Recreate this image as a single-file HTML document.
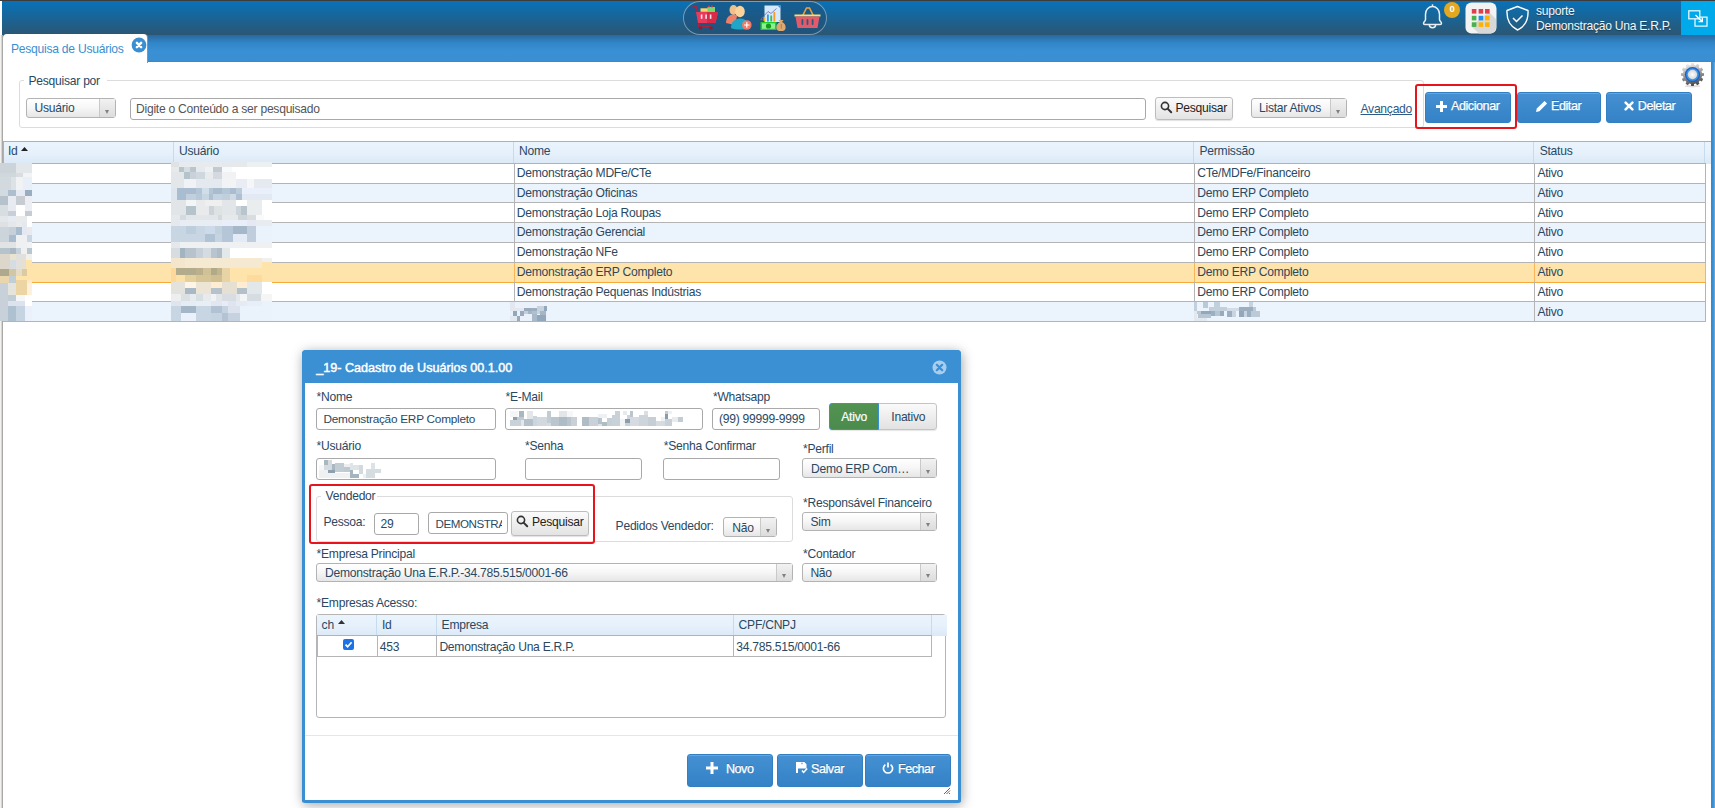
<!DOCTYPE html>
<html><head><meta charset="utf-8">
<style>
*{box-sizing:border-box;margin:0;padding:0}
html,body{width:1715px;height:808px;overflow:hidden;background:#fff;font-family:"Liberation Sans",sans-serif;font-size:12.1px;letter-spacing:-0.25px;color:#2a4961}
.bt{position:absolute;white-space:nowrap;line-height:1;color:#fff;font-size:12.6px;letter-spacing:-0.45px;-webkit-text-stroke:.25px #fff;text-shadow:0 -1px 0 rgba(0,40,90,.25)}
.a{position:absolute}
.t{position:absolute;white-space:nowrap;line-height:1}
#topdark{left:0;top:0;width:1715px;height:1px;background:#3c3c3c}
#topbar{left:2px;top:1px;width:1713px;height:34px;background:linear-gradient(#0872b8,#2b5673)}
#tabbar{left:3px;top:35px;width:1712px;height:27px;background:linear-gradient(#2a68a0 0px,#3286c8 8px,#3a90d4 16px,#3a8fd3 26px,#2f86cc 27px)}
#tab{left:3px;top:34px;width:144px;height:29px;background:#fff;border-radius:4px 4px 0 0;box-shadow:1px 0 0 #9a8f88}
.inp{position:absolute;border:1px solid #a9a9a9;border-radius:3px;background:#fff}
.sel{position:absolute;border:1px solid #b3b3b3;border-radius:3px;background:linear-gradient(#fff,#f6f6f6 50%,#e6e6e6)}
.sel .arr{position:absolute;right:0;top:0;bottom:0;width:16px;border-left:1px solid #c9c9c9;background:linear-gradient(#f2f2f2,#dcdcdc)}
.sel .arr:after{content:"";position:absolute;left:5px;bottom:3.5px;border-left:2.8px solid transparent;border-right:2.8px solid transparent;border-top:4.5px solid #808080}
.gbtn{position:absolute;border:1px solid #bdbdbd;border-radius:3px;background:linear-gradient(#fbfbfb,#e3e3e3);box-shadow:0 1px 1px rgba(0,0,0,.12)}
.bbtn{position:absolute;border:1px solid #3280c2;border-radius:3px;background:linear-gradient(#4590d2,#3a88cb 60%,#3583c6);box-shadow:inset 0 1px 0 rgba(255,255,255,.18);color:#fff;font-weight:bold;font-size:11px}
</style></head><body>
<div id="topdark" class="a"></div>
<div id="topbar" class="a"></div>
<div class="a" style="left:0;top:1px;width:2px;height:807px;background:#fff"></div>
<div id="tabbar" class="a"></div>
<div id="tab" class="a"></div>
<div class="t" style="left:11px;top:43px;color:#3a8fd0">Pesquisa de Usuários</div>
<div class="a" style="left:0;top:35px;width:1px;height:773px;background:#f3f1ed"></div><div class="a" style="left:1px;top:35px;width:1px;height:773px;background:#c5daee"></div><div class="a" style="left:2px;top:35px;width:1px;height:773px;background:#a8a8a8"></div>
<div class="a" style="left:1711px;top:62px;width:4px;height:746px;background:linear-gradient(90deg,#3388d0,#3a90d4 55%,#72afe2)"></div>
<div class="a" style="left:19px;top:80px;width:1405px;height:48px;border:1px solid #dcdcdc;border-radius:3px"></div>
<div class="a" style="left:24px;top:74px;width:83px;height:12px;background:#fff"></div>
<div class="t" style="left:28.5px;top:75.3px">Pesquisar por</div>
<div class="sel" style="left:26px;top:98px;width:90px;height:20px"><div class="arr"></div></div>
<div class="t" style="left:34.5px;top:102.2px">Usuário</div>
<div class="inp" style="left:130px;top:98px;width:1016px;height:22px"></div>
<div class="t" style="left:136px;top:102.8px;color:#555">Digite o Conteúdo a ser pesquisado</div>
<div class="gbtn" style="left:1155px;top:97px;width:78px;height:23px"></div>
<svg class="a" style="left:1160px;top:101px" width="13" height="13" viewBox="0 0 13 13"><circle cx="5" cy="5" r="3.6" fill="none" stroke="#333" stroke-width="1.6"/><line x1="7.6" y1="7.6" x2="11.2" y2="11.2" stroke="#333" stroke-width="2" stroke-linecap="round"/></svg>
<div class="t" style="left:1175.5px;top:102.2px;color:#222">Pesquisar</div>
<div class="sel" style="left:1251px;top:98px;width:96px;height:20px"><div class="arr"></div></div>
<div class="t" style="left:1259px;top:101.6px">Listar Ativos</div>
<div class="t" style="left:1360.5px;top:103px;color:#2a5a85;text-decoration:underline">Avançado</div>
<div class="a" style="left:1415px;top:84px;width:102px;height:45px;border:2px solid #e8141c;border-radius:3px"></div>
<div class="bbtn" style="left:1425px;top:92px;width:86px;height:31px"></div>
<div class="bbtn" style="left:1517px;top:92px;width:84px;height:31px"></div>
<div class="bbtn" style="left:1606px;top:92px;width:86px;height:31px"></div>
<svg class="a" style="left:1435px;top:100px" width="13" height="13" viewBox="0 0 13 13"><path d="M5 1h3v4h4v3H8v4H5V8H1V5h4z" fill="#fff"/></svg>
<div class="bt" style="left:1451px;top:100.2px">Adicionar</div>
<svg class="a" style="left:1535px;top:99px" width="13" height="14" viewBox="0 0 13 14"><path d="M1 13l0.8-3.4L9.5 1.9l2.6 2.6-7.7 7.7z" fill="#fff"/></svg>
<div class="bt" style="left:1551px;top:100.2px">Editar</div>
<svg class="a" style="left:1623.5px;top:100.5px" width="10" height="10" viewBox="0 0 10 10"><path d="M1.6 1.6l6.8 6.8M8.4 1.6l-6.8 6.8" stroke="#fff" stroke-width="2.5" stroke-linecap="round"/></svg>
<div class="bt" style="left:1637.8px;top:100.2px">Deletar</div>
<svg class="a" style="left:1680px;top:61.5px" width="25" height="26" viewBox="0 0 25 26"><defs><linearGradient id="gg" x1="0" y1="0" x2="0" y2="1"><stop offset="0" stop-color="#eeeeee"/><stop offset="0.45" stop-color="#a0a0a0"/><stop offset="1" stop-color="#454545"/></linearGradient><radialGradient id="gw"><stop offset="0" stop-color="#fff"/><stop offset="1" stop-color="#d6d6d6"/></radialGradient></defs><ellipse cx="12.5" cy="24.2" rx="8" ry="1.3" fill="rgba(0,0,0,.12)"/><path d="M12.50 2.90 L13.40 2.94 L14.19 1.02 L16.77 1.71 L16.50 3.77 L17.30 4.19 L18.06 4.67 L19.71 3.41 L21.59 5.29 L20.33 6.94 L20.81 7.70 L21.23 8.50 L23.29 8.23 L23.98 10.81 L22.06 11.60 L22.10 12.50 L22.06 13.40 L23.98 14.19 L23.29 16.77 L21.23 16.50 L20.81 17.30 L20.33 18.06 L21.59 19.71 L19.71 21.59 L18.06 20.33 L17.30 20.81 L16.50 21.23 L16.77 23.29 L14.19 23.98 L13.40 22.06 L12.50 22.10 L11.60 22.06 L10.81 23.98 L8.23 23.29 L8.50 21.23 L7.70 20.81 L6.94 20.33 L5.29 21.59 L3.41 19.71 L4.67 18.06 L4.19 17.30 L3.77 16.50 L1.71 16.77 L1.02 14.19 L2.94 13.40 L2.90 12.50 L2.94 11.60 L1.02 10.81 L1.71 8.23 L3.77 8.50 L4.19 7.70 L4.67 6.94 L3.41 5.29 L5.29 3.41 L6.94 4.67 L7.70 4.19 L8.50 3.77 L8.23 1.71 L10.81 1.02 L11.60 2.94Z" fill="url(#gg)" transform="rotate(-15 12.5 12.5)"/><circle cx="12.5" cy="12.5" r="7.6" fill="#1560c4"/><circle cx="12.5" cy="12.5" r="6.3" fill="#3a95ea"/><circle cx="12.5" cy="12.5" r="4.7" fill="url(#gw)"/></svg>
<div class="a" style="left:3px;top:141px;width:1708px;height:1px;background:#b0b0b0"></div>
<div class="a" style="left:3px;top:141px;width:1px;height:181px;background:#b0b0b0"></div>
<div class="a" style="left:4px;top:142px;width:1707px;height:21px;background:linear-gradient(#eaf4fd,#e6f1fc 50%,#dce9f6)"></div>
<div class="a" style="left:3px;top:163px;width:1703px;height:1px;background:#aeb3b8"></div>
<div class="a" style="left:1706px;top:163px;width:5px;height:1px;background:#dbe8f5"></div>
<div class="a" style="left:173px;top:142px;width:1px;height:21px;background:#c5dcef"></div>
<div class="a" style="left:513px;top:142px;width:1px;height:21px;background:#c5dcef"></div>
<div class="a" style="left:1193px;top:142px;width:1px;height:21px;background:#c5dcef"></div>
<div class="a" style="left:1533px;top:142px;width:1px;height:21px;background:#c5dcef"></div>
<div class="a" style="left:1704px;top:142px;width:1px;height:21px;background:#c5dcef"></div>
<div class="t" style="left:8px;top:144.88px">Id</div>
<div class="t" style="left:179px;top:144.88px">Usuário</div>
<div class="t" style="left:519px;top:144.88px">Nome</div>
<div class="t" style="left:1199.5px;top:144.88px">Permissão</div>
<div class="t" style="left:1539.7px;top:144.88px">Status</div>
<svg class="a" style="left:21px;top:147px" width="7" height="4"><path d="M0 4L3.5 0L7 4z" fill="#222"/></svg>
<div class="a" style="left:4px;top:164px;width:1701px;height:19px;background:#fff"></div>
<div class="a" style="left:3px;top:183px;width:1703px;height:1px;background:#b4b4b4"></div>
<div class="t" style="left:516.8px;top:166.78px">Demonstração MDFe/CTe</div>
<div class="t" style="left:1197.3px;top:166.78px">CTe/MDFe/Financeiro</div>
<div class="t" style="left:1537.4px;top:166.78px">Ativo</div>
<div class="a" style="left:4px;top:184px;width:1701px;height:18px;background:#ebf3fd"></div>
<div class="a" style="left:3px;top:202px;width:1703px;height:1px;background:#b4b4b4"></div>
<div class="t" style="left:516.8px;top:186.65px">Demonstração Oficinas</div>
<div class="t" style="left:1197.3px;top:186.65px">Demo ERP Completo</div>
<div class="t" style="left:1537.4px;top:186.65px">Ativo</div>
<div class="a" style="left:4px;top:203px;width:1701px;height:19px;background:#fff"></div>
<div class="a" style="left:3px;top:222px;width:1703px;height:1px;background:#b4b4b4"></div>
<div class="t" style="left:516.8px;top:206.52px">Demonstração Loja Roupas</div>
<div class="t" style="left:1197.3px;top:206.52px">Demo ERP Completo</div>
<div class="t" style="left:1537.4px;top:206.52px">Ativo</div>
<div class="a" style="left:4px;top:223px;width:1701px;height:19px;background:#ebf3fd"></div>
<div class="a" style="left:3px;top:242px;width:1703px;height:1px;background:#b4b4b4"></div>
<div class="t" style="left:516.8px;top:226.39px">Demonstração Gerencial</div>
<div class="t" style="left:1197.3px;top:226.39px">Demo ERP Completo</div>
<div class="t" style="left:1537.4px;top:226.39px">Ativo</div>
<div class="a" style="left:4px;top:243px;width:1701px;height:19px;background:#fff"></div>
<div class="a" style="left:3px;top:262px;width:1703px;height:1px;background:#b4b4b4"></div>
<div class="t" style="left:516.8px;top:246.26px">Demonstração NFe</div>
<div class="t" style="left:1197.3px;top:246.26px">Demo ERP Completo</div>
<div class="t" style="left:1537.4px;top:246.26px">Ativo</div>
<div class="a" style="left:4px;top:263px;width:1701px;height:19px;background:#fee3aa"></div>
<div class="a" style="left:3px;top:282px;width:1703px;height:1px;background:#f9a938"></div>
<div class="t" style="left:516.8px;top:266.13px">Demonstração ERP Completo</div>
<div class="t" style="left:1197.3px;top:266.13px">Demo ERP Completo</div>
<div class="t" style="left:1537.4px;top:266.13px">Ativo</div>
<div class="a" style="left:4px;top:283px;width:1701px;height:18px;background:#fff"></div>
<div class="a" style="left:3px;top:301px;width:1703px;height:1px;background:#b4b4b4"></div>
<div class="t" style="left:516.8px;top:286.00px">Demonstração Pequenas Indústrias</div>
<div class="t" style="left:1197.3px;top:286.00px">Demo ERP Completo</div>
<div class="t" style="left:1537.4px;top:286.00px">Ativo</div>
<div class="a" style="left:4px;top:302px;width:1701px;height:19px;background:#ebf3fd"></div>
<div class="a" style="left:3px;top:321px;width:1703px;height:1px;background:#b4b4b4"></div>
<div class="t" style="left:1537.4px;top:305.87px">Ativo</div>
<div class="a" style="left:514px;top:164px;width:1px;height:157px;background:#b4b4b4"></div>
<div class="a" style="left:1194px;top:164px;width:1px;height:157px;background:#b4b4b4"></div>
<div class="a" style="left:1534px;top:164px;width:1px;height:157px;background:#b4b4b4"></div>
<div class="a" style="left:1705px;top:164px;width:1px;height:157px;background:#b4b4b4"></div>
<div class="a" style="left:514px;top:263px;width:1px;height:19px;background:#f9b458"></div>
<div class="a" style="left:1194px;top:263px;width:1px;height:19px;background:#f9b458"></div>
<div class="a" style="left:1534px;top:263px;width:1px;height:19px;background:#f9b458"></div>
<div class="a" style="left:1705px;top:263px;width:1px;height:19px;background:#f9b458"></div>
<!--MOSAIC_T--><svg class="a" style="left:0;top:0" width="1715" height="808" shape-rendering="crispEdges"><rect x="0" y="163" width="16" height="10" fill="#ccd3d9"/><rect x="16" y="163" width="16" height="10" fill="#e3e7ea"/><rect x="0" y="173" width="16" height="4" fill="#d0d7dd"/><rect x="16" y="173" width="7" height="4" fill="#d8dde0"/><rect x="23" y="173" width="9" height="4" fill="#f2f3f4"/><rect x="0" y="177" width="11" height="13" fill="#d2d9df"/><rect x="11" y="177" width="5" height="13" fill="#dde2e5"/><rect x="16" y="177" width="7" height="13" fill="#f1f2f3"/><rect x="23" y="177" width="9" height="13" fill="#e8eff9"/><rect x="0" y="190" width="8" height="6" fill="#d3dae0"/><rect x="8" y="190" width="8" height="6" fill="#adbfcf"/><rect x="16" y="190" width="9" height="6" fill="#e6ebf3"/><rect x="25" y="190" width="7" height="6" fill="#98adbf"/><rect x="0" y="196" width="8" height="9" fill="#b5c2cb"/><rect x="8" y="196" width="8" height="9" fill="#e8ebf2"/><rect x="16" y="196" width="9" height="9" fill="#c6ccd2"/><rect x="25" y="196" width="7" height="9" fill="#eceef3"/><rect x="0" y="205" width="8" height="6" fill="#d7dde1"/><rect x="8" y="205" width="8" height="6" fill="#e7eaf0"/><rect x="16" y="205" width="9" height="6" fill="#ffffff"/><rect x="25" y="205" width="7" height="6" fill="#eceef3"/><rect x="0" y="211" width="8" height="5" fill="#d7dde1"/><rect x="8" y="211" width="8" height="5" fill="#c8cfd6"/><rect x="16" y="211" width="9" height="5" fill="#ffffff"/><rect x="25" y="211" width="7" height="5" fill="#c5ccd3"/><rect x="0" y="216" width="8" height="6" fill="#e3e7ea"/><rect x="8" y="216" width="8" height="6" fill="#e6eaf2"/><rect x="16" y="216" width="11" height="6" fill="#e8eaec"/><rect x="27" y="216" width="5" height="6" fill="#ffffff"/><rect x="0" y="222" width="8" height="5" fill="#dde1e4"/><rect x="8" y="222" width="8" height="5" fill="#e5e8ea"/><rect x="16" y="222" width="6" height="5" fill="#e9ebed"/><rect x="22" y="222" width="5" height="5" fill="#e4e8f0"/><rect x="27" y="222" width="5" height="5" fill="#ffffff"/><rect x="0" y="227" width="9" height="8" fill="#cdd5dc"/><rect x="9" y="227" width="7" height="8" fill="#c7d0d8"/><rect x="16" y="227" width="6" height="8" fill="#a9bcce"/><rect x="22" y="227" width="5" height="8" fill="#e4e8f0"/><rect x="27" y="227" width="5" height="8" fill="#e8eaf0"/><rect x="0" y="235" width="9" height="7" fill="#cdd5dc"/><rect x="9" y="235" width="7" height="7" fill="#a9bccd"/><rect x="16" y="235" width="11" height="7" fill="#eef0f2"/><rect x="27" y="235" width="5" height="7" fill="#c9d7e5"/><rect x="0" y="242" width="16" height="6" fill="#e1e3e5"/><rect x="16" y="242" width="11" height="6" fill="#eef0f1"/><rect x="27" y="242" width="5" height="6" fill="#f1f2f3"/><rect x="0" y="248" width="10" height="6" fill="#b4c3cc"/><rect x="10" y="248" width="6" height="6" fill="#a9b8c3"/><rect x="16" y="248" width="5" height="6" fill="#c6d1d9"/><rect x="21" y="248" width="6" height="6" fill="#eef0f1"/><rect x="27" y="248" width="5" height="6" fill="#b8c6d0"/><rect x="0" y="254" width="10" height="6" fill="#ddd6ca"/><rect x="10" y="254" width="6" height="6" fill="#ebe3d2"/><rect x="16" y="254" width="10" height="6" fill="#e1e0dc"/><rect x="26" y="254" width="6" height="6" fill="#f1f0eb"/><rect x="0" y="260" width="10" height="9" fill="#ddd6ca"/><rect x="10" y="260" width="6" height="9" fill="#d6dde2"/><rect x="16" y="260" width="5" height="9" fill="#e1e0dc"/><rect x="21" y="260" width="5" height="9" fill="#e6e0d0"/><rect x="26" y="260" width="6" height="9" fill="#fee3aa"/><rect x="0" y="269" width="9" height="7" fill="#aea88c"/><rect x="9" y="269" width="7" height="7" fill="#d3c6a4"/><rect x="16" y="269" width="6" height="7" fill="#e6dcc6"/><rect x="22" y="269" width="5" height="7" fill="#dccaa0"/><rect x="27" y="269" width="5" height="7" fill="#fee3aa"/><rect x="0" y="276" width="9" height="7" fill="#ead6ad"/><rect x="9" y="276" width="7" height="7" fill="#c0ced8"/><rect x="16" y="276" width="16" height="4" fill="#fee3aa"/><rect x="16" y="280" width="11" height="3" fill="#ecd5a3"/><rect x="27" y="280" width="5" height="3" fill="#fde8c7"/><rect x="0" y="283" width="8" height="12" fill="#c8d1d9"/><rect x="8" y="283" width="8" height="12" fill="#e4e3dc"/><rect x="16" y="283" width="11" height="12" fill="#ecd5a3"/><rect x="27" y="283" width="5" height="12" fill="#fff0dc"/><rect x="0" y="295" width="8" height="26" fill="#c8d1d9"/><rect x="8" y="295" width="8" height="6" fill="#c0cdd5"/><rect x="16" y="295" width="9" height="6" fill="#f4f6f8"/><rect x="25" y="295" width="7" height="6" fill="#ffffff"/><rect x="8" y="301" width="17" height="5" fill="#dce3ee"/><rect x="25" y="301" width="7" height="5" fill="#ffffff"/><rect x="8" y="306" width="8" height="15" fill="#adc1d1"/><rect x="16" y="306" width="9" height="15" fill="#c6d4e1"/><rect x="25" y="306" width="7" height="15" fill="#eaf1fb"/><rect x="171" y="162" width="8" height="5" fill="#dfe3e6"/><rect x="179" y="162" width="43" height="5" fill="#e8ebee"/><rect x="222" y="162" width="25" height="5" fill="#e6e9ec"/><rect x="247" y="162" width="25" height="5" fill="#edf0f2"/><rect x="171" y="167" width="8" height="5" fill="#e8e9eb"/><rect x="179" y="167" width="5" height="5" fill="#b9c5cd"/><rect x="184" y="167" width="6" height="5" fill="#d5dde0"/><rect x="190" y="167" width="6" height="5" fill="#bac6ce"/><rect x="196" y="167" width="9" height="5" fill="#e6eaed"/><rect x="205" y="167" width="8" height="5" fill="#eef1f3"/><rect x="213" y="167" width="9" height="5" fill="#c2cad1"/><rect x="222" y="167" width="10" height="5" fill="#f8f9fa"/><rect x="232" y="167" width="40" height="5" fill="#ffffff"/><rect x="171" y="172" width="13" height="7" fill="#e4e7ea"/><rect x="184" y="172" width="6" height="7" fill="#b5c3cb"/><rect x="190" y="172" width="6" height="7" fill="#c9d2d9"/><rect x="196" y="172" width="9" height="7" fill="#d0d8df"/><rect x="205" y="172" width="8" height="7" fill="#e8ebee"/><rect x="213" y="172" width="9" height="7" fill="#d3d9df"/><rect x="222" y="172" width="14" height="7" fill="#f1f2f4"/><rect x="236" y="172" width="36" height="7" fill="#ffffff"/><rect x="171" y="179" width="13" height="9" fill="#e4e7ea"/><rect x="184" y="179" width="12" height="9" fill="#f0f2f5"/><rect x="196" y="179" width="26" height="9" fill="#e4e8ef"/><rect x="222" y="179" width="14" height="9" fill="#f2f3f5"/><rect x="236" y="179" width="11" height="9" fill="#e9ecf3"/><rect x="247" y="179" width="7" height="9" fill="#f5f6f8"/><rect x="254" y="179" width="18" height="9" fill="#e5e9f0"/><rect x="171" y="188" width="6" height="6" fill="#dde5ef"/><rect x="177" y="188" width="19" height="6" fill="#aabdd0"/><rect x="196" y="188" width="6" height="6" fill="#b4c5d6"/><rect x="202" y="188" width="7" height="6" fill="#d0deea"/><rect x="209" y="188" width="4" height="6" fill="#b3c5d6"/><rect x="213" y="188" width="9" height="6" fill="#a8bcce"/><rect x="222" y="188" width="8" height="6" fill="#b5c6d6"/><rect x="230" y="188" width="6" height="6" fill="#aabdd0"/><rect x="236" y="188" width="6" height="6" fill="#bccbd9"/><rect x="242" y="188" width="30" height="6" fill="#e9f0fb"/><rect x="171" y="194" width="6" height="6" fill="#dde5ef"/><rect x="177" y="194" width="9" height="6" fill="#a9bdd0"/><rect x="186" y="194" width="10" height="6" fill="#c2d0de"/><rect x="196" y="194" width="6" height="6" fill="#b7c8d8"/><rect x="202" y="194" width="7" height="6" fill="#c8d6e4"/><rect x="209" y="194" width="4" height="6" fill="#aec1d3"/><rect x="213" y="194" width="9" height="6" fill="#c4d3e1"/><rect x="222" y="194" width="8" height="6" fill="#c1cfdd"/><rect x="230" y="194" width="6" height="6" fill="#d0d9e4"/><rect x="236" y="194" width="6" height="6" fill="#aec0d1"/><rect x="242" y="194" width="30" height="6" fill="#e2e9f3"/><rect x="171" y="200" width="15" height="6" fill="#e1e5e7"/><rect x="186" y="200" width="10" height="6" fill="#f4f5f6"/><rect x="196" y="200" width="9" height="6" fill="#e8eaeb"/><rect x="205" y="200" width="17" height="6" fill="#efefef"/><rect x="222" y="200" width="14" height="6" fill="#e3e6e8"/><rect x="236" y="200" width="11" height="6" fill="#ffffff"/><rect x="247" y="200" width="15" height="6" fill="#eaedee"/><rect x="262" y="200" width="10" height="6" fill="#ffffff"/><rect x="171" y="206" width="15" height="9" fill="#e1e5e7"/><rect x="186" y="206" width="10" height="9" fill="#b5c3cb"/><rect x="196" y="206" width="13" height="9" fill="#e8eaeb"/><rect x="209" y="206" width="5" height="9" fill="#ccd3d9"/><rect x="214" y="206" width="8" height="9" fill="#dde2e3"/><rect x="222" y="206" width="14" height="9" fill="#e3e6e8"/><rect x="236" y="206" width="5" height="9" fill="#cdd5dc"/><rect x="241" y="206" width="6" height="9" fill="#b8c5cd"/><rect x="247" y="206" width="15" height="9" fill="#eaedee"/><rect x="262" y="206" width="10" height="9" fill="#ffffff"/><rect x="171" y="215" width="9" height="5" fill="#e6e9ea"/><rect x="180" y="215" width="6" height="5" fill="#d2dbe1"/><rect x="186" y="215" width="32" height="5" fill="#e3e6e8"/><rect x="218" y="215" width="4" height="5" fill="#d3dade"/><rect x="222" y="215" width="16" height="5" fill="#e6e9ea"/><rect x="238" y="215" width="9" height="5" fill="#d0d6d8"/><rect x="247" y="215" width="9" height="5" fill="#d8dde2"/><rect x="256" y="215" width="8" height="5" fill="#fafafa"/><rect x="264" y="215" width="8" height="5" fill="#ffffff"/><rect x="171" y="220" width="9" height="6" fill="#e5e9ee"/><rect x="180" y="220" width="42" height="6" fill="#e8ecf3"/><rect x="222" y="220" width="25" height="6" fill="#e9eef8"/><rect x="247" y="220" width="9" height="6" fill="#e6e9f1"/><rect x="256" y="220" width="16" height="6" fill="#e8ebf0"/><rect x="171" y="226" width="25" height="8" fill="#c8d6e3"/><rect x="186" y="226" width="10" height="8" fill="#bccddb"/><rect x="205" y="226" width="10" height="8" fill="#cddaea"/><rect x="215" y="226" width="7" height="8" fill="#c2d1de"/><rect x="222" y="226" width="11" height="16" fill="#b4c6d7"/><rect x="233" y="226" width="14" height="8" fill="#a5b8c9"/><rect x="247" y="226" width="9" height="16" fill="#bfcddd"/><rect x="256" y="226" width="16" height="16" fill="#eaf2fc"/><rect x="171" y="234" width="34" height="8" fill="#c8d6e3"/><rect x="196" y="226" width="9" height="8" fill="#c8d6e3"/><rect x="205" y="234" width="10" height="8" fill="#b0c3d5"/><rect x="215" y="234" width="7" height="8" fill="#c6d4e1"/><rect x="233" y="234" width="14" height="8" fill="#e3ecf6"/><rect x="171" y="242" width="9" height="6" fill="#e4e8eb"/><rect x="180" y="242" width="92" height="6" fill="#eef0f2"/><rect x="171" y="248" width="9" height="10" fill="#d6dce0"/><rect x="180" y="248" width="5" height="10" fill="#a3b4c1"/><rect x="185" y="248" width="11" height="10" fill="#b6c3cc"/><rect x="196" y="248" width="7" height="10" fill="#c7d0d8"/><rect x="203" y="248" width="8" height="10" fill="#d4dce1"/><rect x="211" y="248" width="6" height="10" fill="#b8c4ce"/><rect x="217" y="248" width="5" height="10" fill="#b0bdc8"/><rect x="222" y="248" width="8" height="10" fill="#e3e8eb"/><rect x="230" y="248" width="42" height="10" fill="#ffffff"/><rect x="171" y="258" width="14" height="10" fill="#f3e6cd"/><rect x="185" y="258" width="77" height="10" fill="#f6e9d2"/><rect x="262" y="258" width="10" height="4" fill="#f0f0f0"/><rect x="262" y="262" width="10" height="6" fill="#fee3aa"/><rect x="171" y="268" width="5" height="14" fill="#fed79a"/><rect x="176" y="268" width="20" height="7" fill="#b3ac8c"/><rect x="196" y="268" width="7" height="7" fill="#bcb08c"/><rect x="203" y="268" width="8" height="7" fill="#cfc297"/><rect x="211" y="268" width="6" height="7" fill="#b2a988"/><rect x="217" y="268" width="5" height="7" fill="#c1b58f"/><rect x="222" y="268" width="8" height="14" fill="#e7d3a4"/><rect x="230" y="268" width="42" height="14" fill="#fee3aa"/><rect x="176" y="275" width="9" height="7" fill="#fde0a6"/><rect x="185" y="275" width="11" height="7" fill="#e3d09c"/><rect x="196" y="275" width="15" height="7" fill="#d6c697"/><rect x="211" y="275" width="11" height="7" fill="#cfc093"/><rect x="247" y="275" width="15" height="7" fill="#fedb9c"/><rect x="171" y="282" width="14" height="12" fill="#e4e2dc"/><rect x="185" y="282" width="11" height="6" fill="#fff5e6"/><rect x="196" y="282" width="15" height="12" fill="#ece4d5"/><rect x="211" y="282" width="11" height="6" fill="#feecd3"/><rect x="222" y="282" width="15" height="12" fill="#e6e0d2"/><rect x="237" y="282" width="10" height="6" fill="#feecd3"/><rect x="247" y="282" width="15" height="12" fill="#e2e7ea"/><rect x="262" y="282" width="10" height="12" fill="#ffffff"/><rect x="185" y="288" width="11" height="6" fill="#a8b8c5"/><rect x="211" y="288" width="11" height="6" fill="#b5c2cc"/><rect x="237" y="288" width="10" height="6" fill="#b3c0ca"/><rect x="171" y="294" width="10" height="7" fill="#eceeef"/><rect x="181" y="294" width="9" height="7" fill="#dbe0e3"/><rect x="190" y="294" width="6" height="7" fill="#e8ebed"/><rect x="196" y="294" width="7" height="7" fill="#d8dfe2"/><rect x="203" y="294" width="8" height="7" fill="#e8ebed"/><rect x="211" y="294" width="5" height="7" fill="#f1f2f3"/><rect x="216" y="294" width="6" height="7" fill="#e2e6e8"/><rect x="222" y="294" width="14" height="7" fill="#d8dde3"/><rect x="236" y="294" width="4" height="7" fill="#e4e8eb"/><rect x="240" y="294" width="7" height="7" fill="#f4f5f6"/><rect x="247" y="294" width="14" height="7" fill="#d6dde2"/><rect x="261" y="294" width="11" height="7" fill="#f5f5f5"/><rect x="171" y="301" width="10" height="5" fill="#dfe5ed"/><rect x="181" y="301" width="15" height="5" fill="#e6ecf3"/><rect x="196" y="301" width="15" height="5" fill="#e8eef6"/><rect x="211" y="301" width="11" height="5" fill="#e1e6f0"/><rect x="222" y="301" width="6" height="5" fill="#e8ecf4"/><rect x="228" y="301" width="8" height="5" fill="#dfe5ef"/><rect x="236" y="301" width="11" height="5" fill="#e6eaf3"/><rect x="247" y="301" width="15" height="5" fill="#e8eef8"/><rect x="262" y="301" width="10" height="5" fill="#eaf2fc"/><rect x="171" y="306" width="10" height="15" fill="#c8d5e2"/><rect x="181" y="306" width="15" height="7" fill="#a4b7c9"/><rect x="196" y="306" width="15" height="15" fill="#c8d5e2"/><rect x="211" y="306" width="11" height="7" fill="#b0c2d3"/><rect x="222" y="306" width="6" height="7" fill="#c5d3e1"/><rect x="228" y="306" width="12" height="7" fill="#dce3ee"/><rect x="240" y="306" width="32" height="15" fill="#eaf2fc"/><rect x="181" y="313" width="15" height="8" fill="#eaf1fb"/><rect x="211" y="313" width="11" height="8" fill="#c6d4e1"/><rect x="222" y="313" width="6" height="8" fill="#b3c3d3"/><rect x="228" y="313" width="12" height="8" fill="#c6d2df"/><rect x="510" y="302" width="37" height="19" fill="#eaf1fb"/><rect x="510" y="302" width="5" height="6" fill="#e3e8f0"/><rect x="510" y="308" width="14" height="3" fill="#e3e8f0"/><rect x="524" y="308" width="7" height="3" fill="#98aabc"/><rect x="531" y="308" width="6" height="3" fill="#9caec0"/><rect x="537" y="306" width="7" height="5" fill="#c6d3df"/><rect x="544" y="306" width="3" height="5" fill="#93a7ba"/><rect x="513" y="311" width="4" height="5" fill="#93a7ba"/><rect x="520" y="311" width="4" height="5" fill="#98aabc"/><rect x="524" y="311" width="4" height="3" fill="#c2d0dd"/><rect x="528" y="311" width="4" height="3" fill="#a5b6c7"/><rect x="532" y="311" width="5" height="3" fill="#b1c0cf"/><rect x="537" y="311" width="3" height="3" fill="#c8d5e1"/><rect x="540" y="311" width="6" height="4" fill="#a5b6c6"/><rect x="510" y="316" width="7" height="5" fill="#e3e9f1"/><rect x="517" y="316" width="3" height="5" fill="#98aabc"/><rect x="532" y="314" width="5" height="7" fill="#a8b9ca"/><rect x="537" y="315" width="9" height="6" fill="#93a7ba"/><rect x="1194" y="302" width="3" height="9" fill="#c2d0dd"/><rect x="1203" y="302" width="5" height="6" fill="#b8c9d8"/><rect x="1214" y="302" width="6" height="8" fill="#c2d0dd"/><rect x="1209" y="307" width="18" height="4" fill="#c2d0dd"/><rect x="1227" y="308" width="12" height="3" fill="#d1dce8"/><rect x="1239" y="307" width="14" height="4" fill="#9baec0"/><rect x="1249" y="302" width="4" height="5" fill="#c5d2df"/><rect x="1253" y="307" width="3" height="4" fill="#bccad8"/><rect x="1194" y="311" width="7" height="3" fill="#bcc7d2"/><rect x="1201" y="311" width="10" height="3" fill="#93a7ba"/><rect x="1211" y="311" width="4" height="5" fill="#9cafc1"/><rect x="1215" y="311" width="5" height="5" fill="#b6c5d3"/><rect x="1220" y="311" width="4" height="5" fill="#97aabc"/><rect x="1227" y="311" width="5" height="6" fill="#9cafc1"/><rect x="1232" y="311" width="4" height="6" fill="#c8d4e0"/><rect x="1239" y="311" width="5" height="6" fill="#93a7ba"/><rect x="1244" y="311" width="3" height="6" fill="#c8d4e0"/><rect x="1247" y="311" width="4" height="6" fill="#9cafc1"/><rect x="1251" y="311" width="9" height="6" fill="#bccad8"/><rect x="1198" y="314" width="13" height="4" fill="#b6c5d3"/><rect x="1194" y="318" width="13" height="3" fill="#e3e7ee"/><rect x="1194" y="311" width="3" height="10" fill="#e3e7ee"/></svg>
<div class="a" style="left:302px;top:350px;width:659px;height:453px;border:3px solid #3a8fd3;border-top:0;border-radius:4px 4px 3px 3px;background:#fff;box-shadow:1px 2px 12px rgba(0,0,0,.36)"></div>
<div class="a" style="left:302px;top:350px;width:659px;height:33px;background:#3b8fd3;border-radius:4px 4px 0 0"></div>
<div class="t" style="left:316.3px;top:361.6px;font-size:12.6px;color:#fff;letter-spacing:0;-webkit-text-stroke:.45px #fff">_19- Cadastro de Usuários 00.1.00</div>
<svg class="a" style="left:932px;top:360px" width="15" height="15" viewBox="0 0 15 15"><circle cx="7.5" cy="7.5" r="7" fill="#a9cdee"/><path d="M4.8 4.8l5.4 5.4M10.2 4.8l-5.4 5.4" stroke="#3b8fd3" stroke-width="2.2" stroke-linecap="round"/></svg>
<div class="t" style="left:316.5px;top:390.88px;">*Nome</div>
<div class="t" style="left:505.5px;top:390.98px;">*E-Mail</div>
<div class="t" style="left:713px;top:391.08px;">*Whatsapp</div>
<div class="inp" style="left:316px;top:408px;width:180px;height:22px"></div>
<div class="t" style="left:323.5px;top:413.93px;font-size:11.8px">Demonstração ERP Completo</div>
<div class="inp" style="left:505px;top:408px;width:198px;height:22px"></div>
<div class="inp" style="left:712px;top:408px;width:108px;height:22px"></div>
<div class="t" style="left:719px;top:413.38px;">(99) 99999-9999</div>
<div class="a" style="left:829px;top:403px;width:108px;height:27px;border:1px solid #c4c4c4;border-radius:3px;background:linear-gradient(#fafafa,#e2e2e2);box-shadow:0 1px 1px rgba(0,0,0,.1)"></div>
<div class="a" style="left:829px;top:403px;width:50px;height:27px;border:1px solid #3a8fd3;border-right:1.5px solid #3a8fd3;border-radius:3px 0 0 3px;background:linear-gradient(#529352,#4b8b4d)"></div>
<div class="t" style="left:841.3px;top:411.18px;color:#fff;-webkit-text-stroke:.2px #fff">Ativo</div>
<div class="t" style="left:891.3px;top:411.18px;">Inativo</div>
<div class="t" style="left:316.5px;top:439.88px;">*Usuário</div>
<div class="t" style="left:525px;top:439.88px;">*Senha</div>
<div class="t" style="left:663.7px;top:439.88px;">*Senha Confirmar</div>
<div class="t" style="left:803px;top:442.98px;">*Perfil</div>
<div class="inp" style="left:316px;top:458px;width:180px;height:22px"></div>
<svg class="a" style="left:0;top:0" width="1715" height="808" shape-rendering="crispEdges"><rect x="510" y="411" width="8" height="6" fill="#f3f5f6"/><rect x="519" y="411" width="5" height="6" fill="#a9b7c0"/><rect x="527" y="411" width="6" height="11" fill="#e3e7ea"/><rect x="547" y="411" width="4" height="12" fill="#c2ccd3"/><rect x="559" y="411" width="8" height="6" fill="#e2e6e9"/><rect x="567" y="411" width="6" height="6" fill="#f6f7f8"/><rect x="513" y="417" width="4" height="3" fill="#8fa1ae"/><rect x="517" y="417" width="7" height="3" fill="#bfcad1"/><rect x="510" y="420" width="11" height="6" fill="#c9d2d8"/><rect x="521" y="420" width="3" height="6" fill="#e3e7ea"/><rect x="524" y="419" width="9" height="7" fill="#b4c1ca"/><rect x="533" y="416" width="4" height="10" fill="#ccd5dc"/><rect x="537" y="417" width="10" height="9" fill="#d2d9de"/><rect x="546" y="423" width="5" height="3" fill="#d5dbe0"/><rect x="551" y="417" width="8" height="9" fill="#bac6ce"/><rect x="559" y="417" width="8" height="9" fill="#adbcc5"/><rect x="567" y="417" width="4" height="9" fill="#b9c5cd"/><rect x="571" y="417" width="6" height="9" fill="#c9d1d7"/><rect x="582" y="417" width="7" height="9" fill="#aebcc5"/><rect x="589" y="417" width="9" height="9" fill="#c8d1d8"/><rect x="598" y="418" width="4" height="6" fill="#b3c0c9"/><rect x="598" y="424" width="5" height="2" fill="#dde3e6"/><rect x="598" y="414" width="9" height="4" fill="#eef1f3"/><rect x="600" y="418" width="2" height="4" fill="#bac6ce"/><rect x="602" y="422" width="5" height="4" fill="#aebcc5"/><rect x="607" y="418" width="5" height="8" fill="#c5cfd6"/><rect x="612" y="415" width="8" height="11" fill="#c8d1d8"/><rect x="615" y="411" width="5" height="4" fill="#c8d1d8"/><rect x="620" y="419" width="5" height="7" fill="#f1f3f4"/><rect x="623" y="411" width="4" height="4" fill="#e6eaed"/><rect x="630" y="411" width="3" height="6" fill="#bac6ce"/><rect x="627" y="415" width="3" height="4" fill="#ccd5db"/><rect x="625" y="419" width="5" height="4" fill="#8b9dab"/><rect x="625" y="423" width="5" height="3" fill="#c8d1d8"/><rect x="630" y="417" width="9" height="9" fill="#d5dbe0"/><rect x="639" y="415" width="9" height="11" fill="#cdd5db"/><rect x="644" y="411" width="4" height="4" fill="#d9dfe3"/><rect x="648" y="417" width="8" height="9" fill="#c5ced5"/><rect x="656" y="421" width="9" height="5" fill="#d5dce0"/><rect x="661" y="417" width="4" height="4" fill="#eef1f3"/><rect x="665" y="411" width="3" height="3" fill="#c2ccd3"/><rect x="668" y="411" width="4" height="3" fill="#eef1f3"/><rect x="665" y="414" width="3" height="5" fill="#8a9cab"/><rect x="665" y="419" width="7" height="7" fill="#c8d1d8"/><rect x="672" y="417" width="6" height="5" fill="#e8ecee"/><rect x="678" y="417" width="5" height="5" fill="#c2ccd3"/><rect x="324" y="460" width="4" height="5" fill="#a9b7c0"/><rect x="328" y="460" width="4" height="10" fill="#d5dce0"/><rect x="319" y="465" width="5" height="5" fill="#f6f7f8"/><rect x="324" y="465" width="4" height="5" fill="#d5dce0"/><rect x="332" y="464" width="3" height="6" fill="#aab7c0"/><rect x="335" y="463" width="9" height="9" fill="#c2ccd3"/><rect x="344" y="467" width="6" height="5" fill="#bfc9d0"/><rect x="344" y="464" width="6" height="3" fill="#eceef0"/><rect x="350" y="465" width="9" height="5" fill="#e3e7ea"/><rect x="359" y="465" width="4" height="8" fill="#d0d7dd"/><rect x="319" y="470" width="9" height="8" fill="#eef0f2"/><rect x="328" y="470" width="7" height="3" fill="#8ea0ae"/><rect x="328" y="473" width="22" height="5" fill="#eff1f3"/><rect x="350" y="470" width="3" height="8" fill="#a9b7c0"/><rect x="353" y="474" width="6" height="4" fill="#a9b7c0"/><rect x="350" y="463" width="3" height="7" fill="#dfe4e7"/><rect x="353" y="465" width="6" height="5" fill="#dfe4e7"/><rect x="359" y="465" width="4" height="9" fill="#d2d9df"/><rect x="350" y="470" width="3" height="8" fill="#a5b5c0"/><rect x="353" y="474" width="6" height="4" fill="#a5b5c0"/><rect x="366" y="469" width="9" height="9" fill="#d6dde1"/><rect x="371" y="463" width="4" height="6" fill="#dde2e6"/><rect x="375" y="469" width="6" height="4" fill="#d6dde1"/><rect x="363" y="474" width="3" height="4" fill="#eef1f3"/></svg>
<div class="inp" style="left:525px;top:458px;width:117px;height:22px"></div>
<div class="inp" style="left:663px;top:458px;width:117px;height:22px"></div>
<div class="sel" style="left:802px;top:458px;width:135px;height:20px"><div class="arr"></div></div>
<div class="t" style="left:811px;top:462.98px;">Demo ERP Com…</div>
<div class="a" style="left:316px;top:496px;width:477px;height:46px;border:1px solid #dcdcdc;border-radius:3px"></div>
<div class="a" style="left:321px;top:490px;width:56px;height:12px;background:#fff"></div>
<div class="t" style="left:325.6px;top:490.28px;">Vendedor</div>
<div class="t" style="left:323.4px;top:515.98px;">Pessoa:</div>
<div class="inp" style="left:374px;top:513px;width:45px;height:22px"></div>
<div class="t" style="left:380.6px;top:518.18px;">29</div>
<div class="inp" style="left:428px;top:512px;width:80px;height:22px"><div class="a" style="left:5.5px;top:0;width:67px;height:20px;overflow:hidden"><div class="t" style="left:1px;top:4.7px;font-size:11.6px;letter-spacing:-0.45px">DEMONSTRAÇÃO</div></div></div>
<div class="gbtn" style="left:511px;top:511px;width:78px;height:25px"></div>
<svg class="a" style="left:516px;top:515px" width="13" height="13" viewBox="0 0 13 13"><circle cx="5" cy="5" r="3.6" fill="none" stroke="#333" stroke-width="1.6"/><line x1="7.6" y1="7.6" x2="11.2" y2="11.2" stroke="#333" stroke-width="2" stroke-linecap="round"/></svg>
<div class="t" style="left:532px;top:515.98px;color:#222">Pesquisar</div>
<div class="t" style="left:615.6px;top:520.28px;">Pedidos Vendedor:</div>
<div class="sel" style="left:723px;top:517px;width:54px;height:20px"><div class="arr"></div></div>
<div class="t" style="left:732.3px;top:522.38px;">Não</div>
<div class="a" style="left:309px;top:484px;width:286px;height:60px;border:2px solid #e8141c;border-radius:3px"></div>
<div class="t" style="left:803px;top:497.18px;">*Responsável Financeiro</div>
<div class="sel" style="left:802px;top:512px;width:135px;height:19px"><div class="arr"></div></div>
<div class="t" style="left:810.4px;top:516.18px;">Sim</div>
<div class="t" style="left:316.6px;top:547.98px;">*Empresa Principal</div>
<div class="sel" style="left:316px;top:563px;width:477px;height:19px"><div class="arr"></div></div>
<div class="t" style="left:325px;top:566.58px;">Demonstração Una E.R.P.-34.785.515/0001-66</div>
<div class="t" style="left:803px;top:548.18px;">*Contador</div>
<div class="sel" style="left:802px;top:563px;width:135px;height:19px"><div class="arr"></div></div>
<div class="t" style="left:810.4px;top:567.18px;">Não</div>
<div class="t" style="left:316.6px;top:596.98px;">*Empresas Acesso:</div>
<div class="a" style="left:316px;top:614px;width:630px;height:104px;border:1px solid #b5b5b5;border-radius:3px"></div>
<div class="a" style="left:317px;top:615px;width:630px;height:21px;background:linear-gradient(#eaf4fd,#e6f1fc 50%,#dce9f6)"></div>
<div class="a" style="left:317px;top:635px;width:615px;height:1px;background:#aeb3b8"></div>
<div class="a" style="left:376px;top:615px;width:1px;height:20px;background:#c5dcef"></div>
<div class="a" style="left:436px;top:615px;width:1px;height:20px;background:#c5dcef"></div>
<div class="a" style="left:733px;top:615px;width:1px;height:20px;background:#c5dcef"></div>
<div class="a" style="left:931px;top:615px;width:1px;height:20px;background:#c5dcef"></div>
<div class="t" style="left:321.6px;top:618.98px;">ch</div>
<div class="t" style="left:382px;top:618.98px;">Id</div>
<div class="t" style="left:441.6px;top:618.98px;">Empresa</div>
<div class="t" style="left:738.6px;top:619.18px;">CPF/CNPJ</div>
<svg class="a" style="left:337.5px;top:620px" width="7" height="4"><path d="M0 4L3.5 0L7 4z" fill="#333"/></svg>
<div class="a" style="left:317px;top:636px;width:615px;height:21px;border:1px solid #b5b5b5;border-top:0"></div>
<div class="a" style="left:377px;top:636px;width:1px;height:20px;background:#b5b5b5"></div>
<div class="a" style="left:436px;top:636px;width:1px;height:20px;background:#b5b5b5"></div>
<div class="a" style="left:733px;top:636px;width:1px;height:20px;background:#b5b5b5"></div>
<svg class="a" style="left:343px;top:639px" width="11" height="11" viewBox="0 0 11 11"><rect x="0" y="0" width="11" height="11" rx="2" fill="#1a73e8"/><path d="M2.5 5.6l2.1 2.1 4-4.4" stroke="#fff" stroke-width="1.7" fill="none"/></svg>
<div class="t" style="left:379.7px;top:640.78px;">453</div>
<div class="t" style="left:439.4px;top:640.78px;">Demonstração Una E.R.P.</div>
<div class="t" style="left:736.2px;top:640.88px;">34.785.515/0001-66</div>
<div class="a" style="left:305px;top:735px;width:653px;height:1px;background:#e6e6e6"></div>
<div class="bbtn" style="left:687px;top:754px;width:86px;height:33px"></div>
<div class="bbtn" style="left:777px;top:754px;width:86px;height:33px"></div>
<div class="bbtn" style="left:865px;top:754px;width:86px;height:33px"></div>
<svg class="a" style="left:706px;top:762px" width="12" height="12" viewBox="0 0 12 12"><path d="M4.5 0h3v4.5H12v3H7.5V12h-3V7.5H0v-3h4.5z" fill="#fff"/></svg>
<div class="bt" style="left:725.9px;top:763.1px">Novo</div>
<svg class="a" style="left:795px;top:761px" width="14" height="13" viewBox="0 0 14 13"><path d="M1 1h8.3l2.2 2.3v4.2H3V12H1z" fill="#fff"/><rect x="6" y="1.6" width="2" height="1.6" fill="#9cc4ea"/><path d="M7 9.6l1.6 1.8 3.6-3.9" stroke="#fff" stroke-width="1.5" fill="none"/></svg>
<div class="bt" style="left:811px;top:763.1px">Salvar</div>
<svg class="a" style="left:882px;top:762px" width="12" height="12" viewBox="0 0 12 12"><path d="M3.4 2.6A4.6 4.6 0 1 0 8.6 2.6" stroke="#fff" stroke-width="1.7" fill="none"/><line x1="6" y1="0.5" x2="6" y2="5.5" stroke="#fff" stroke-width="1.7"/></svg>
<div class="bt" style="left:897.9px;top:763.1px">Fechar</div>
<svg class="a" style="left:943px;top:787px" width="8" height="8" viewBox="0 0 8 8"><path d="M1 7L7 1M3.5 7L7 3.5M6 7L7 6" stroke="#555" stroke-width="0.9"/></svg>
<div class="a" style="left:683px;top:1px;width:144px;height:33.5px;border:1px solid rgba(200,210,220,.55);border-radius:17px;background:rgba(30,80,120,.55)"></div>
<svg class="a" style="left:691px;top:5px" width="28" height="26" viewBox="0 0 28 26">
<path d="M1.5 1.5h3.5l1.5 5" stroke="#a8253f" stroke-width="1.5" fill="none"/>
<rect x="9.5" y="3.3" width="7.5" height="3.5" fill="#fdd36a"/>
<rect x="16.5" y="2" width="7.5" height="5" fill="#78d86a"/>
<circle cx="18" cy="1.5" r="0.9" fill="#e33"/><circle cx="21" cy="1.5" r="0.9" fill="#e33"/>
<path d="M5 7h22l-2.5 11H7z" fill="#ea3a5c"/>
<path d="M16 7h11l-2.5 11H16z" fill="#d92a48"/>
<rect x="9.8" y="9.5" width="1.6" height="4.3" fill="#f4e8f0"/><rect x="14.3" y="9.5" width="1.6" height="4.3" fill="#f4e8f0"/><rect x="18.8" y="9.5" width="1.6" height="4.3" fill="#f4e8f0"/>
<path d="M7.5 18.5v3h13" stroke="#a8253f" stroke-width="1.4" fill="none"/>
<circle cx="9.5" cy="23" r="1.8" fill="#8a1e38"/><circle cx="20" cy="23" r="1.8" fill="#8a1e38"/>
</svg>
<svg class="a" style="left:725px;top:4px" width="28" height="28" viewBox="0 0 28 28">
<ellipse cx="8.5" cy="6" rx="4" ry="5" fill="#f0c08a"/>
<path d="M1 19c0-5 3-8 7-8.5 2 0 3.5 0.5 4 1.5L10 21z" fill="#ef8068"/>
<ellipse cx="15" cy="7.5" rx="4.8" ry="5.8" fill="#fbd29a"/>
<path d="M6 24c0-6 4-9.5 9-9.5s9 3 9 9.5c-4 2-14 2-18 0z" fill="#1ea5c8"/>
<circle cx="21.8" cy="21" r="4.8" fill="#ef7a68"/>
<path d="M21.8 18.3v5.4M19.1 21h5.4" stroke="#fff" stroke-width="1.2"/>
</svg>
<svg class="a" style="left:760px;top:5px" width="27" height="26" viewBox="0 0 27 26">
<rect x="4.5" y="0.5" width="16" height="16.5" fill="#d6e8fb"/>
<path d="M17.5 0.5h3v3z" fill="#3a8fe0"/>
<path d="M1 14L8 6.5l3 2 5.5-5" stroke="#6a6ab0" stroke-width="0.8" fill="none"/>
<circle cx="1.5" cy="14.5" r="1.1" fill="#e33"/>
<rect x="3.5" y="12" width="1.8" height="4" fill="#f5b828"/>
<rect x="7" y="9.5" width="1.8" height="7" fill="#2d9af0"/>
<rect x="10.3" y="10.5" width="1.8" height="6" fill="#3cc040"/>
<rect x="13.4" y="7" width="1.8" height="9.5" fill="#f59d28"/>
<rect x="0.5" y="17" width="16" height="8" fill="#1ed028"/>
<rect x="2" y="18.3" width="13" height="5.5" fill="#8cf090"/>
<circle cx="8.5" cy="21" r="2.6" fill="#159a20"/>
<path d="M20 17l-1.5-2h5l-1.5 2c3 1.5 4 4 3.5 6.5-0.5 2-2.5 2.7-4.5 2.7s-4-0.7-4.5-2.7c-0.5-2.5 0.5-5 3.5-6.5z" fill="#dca870"/>
<path d="M21.3 19v4.5" stroke="#a57040" stroke-width="0.8"/>
</svg>
<svg class="a" style="left:794px;top:7px" width="28" height="22" viewBox="0 0 28 22">
<path d="M8.5 9L12.5 1h3l4 8" stroke="#f0a040" stroke-width="1.6" fill="none"/>
<rect x="0.5" y="7.5" width="26" height="2" fill="#fde060"/>
<path d="M1.5 9.5h24l-2 11.5H3.5z" fill="#e45a6a"/>
<rect x="7.5" y="12" width="1.8" height="6" rx="0.9" fill="#2c5a78"/><rect x="12.6" y="12" width="1.8" height="6" rx="0.9" fill="#2c5a78"/><rect x="17.7" y="12" width="1.8" height="6" rx="0.9" fill="#2c5a78"/>
</svg>
<svg class="a" style="left:1421px;top:3px" width="24" height="27" viewBox="0 0 24 27">
<path d="M11.5 1.3v2.2" stroke="#e8eef4" stroke-width="1.5"/>
<path d="M4.5 16.5V11.2c0-4.3 3.1-7.6 7-7.6s7 3.3 7 7.6v5.3c0 1.5 2 2.5 2 3.8 0 0.8-0.5 1.1-1.3 1.1H3.8c-0.8 0-1.3-0.3-1.3-1.1 0-1.3 2-2.3 2-3.8z" stroke="#e8eef4" stroke-width="1.5" fill="none" stroke-linejoin="round"/>
<path d="M8.3 21.5a3.2 3.2 0 0 0 6.4 0" stroke="#e8eef4" stroke-width="1.5" fill="none"/>
</svg>
<div class="a" style="left:1444px;top:1.5px;width:16px;height:16px;border-radius:50%;background:#e1a820"></div>
<div class="t" style="left:1449.6px;top:4.4px;color:#fff;font-size:9.5px;font-weight:bold;letter-spacing:0">0</div>
<svg class="a" style="left:1465px;top:2px" width="32" height="32" viewBox="0 0 32 32">
<defs><linearGradient id="sh" x1="0" y1="0" x2="1" y2="1"><stop offset="0.5" stop-color="#f4f4f4"/><stop offset="0.5" stop-color="#d6d6d6"/><stop offset="1" stop-color="#e8e8e8"/></linearGradient></defs>
<rect x="0.5" y="0.5" width="31" height="31" rx="6" fill="#f3f3f3"/>
<path d="M24 10L31 17V25.5a6 6 0 0 1-6 6H14L6 24z" fill="#d8d8d8"/>
<g>
<rect x="6.8" y="7" width="4.6" height="4.6" fill="#e0404e"/><rect x="13.6" y="7" width="4.6" height="4.6" fill="#e0404e"/><rect x="20" y="7" width="4.6" height="4.6" fill="#e0404e"/>
<rect x="6.8" y="13.8" width="4.6" height="4.6" fill="#48b04c"/><rect x="13.6" y="13.8" width="4.6" height="4.6" fill="#1e8ef0"/><rect x="20" y="13.8" width="4.6" height="4.6" fill="#ffb300"/>
<rect x="6.8" y="20.3" width="4.6" height="4.6" fill="#48b04c"/><rect x="13.6" y="20.3" width="4.6" height="4.6" fill="#ffb300"/><rect x="20" y="20.3" width="4.6" height="4.6" fill="#ffb300"/>
</g></svg>
<svg class="a" style="left:1506px;top:5px" width="24" height="27" viewBox="0 0 24 27">
<path d="M11.5 1.5L22 5.5c0.5 9-3 16-10.5 19.5C4 21.5 0.5 14.5 1 5.5z" stroke="#fff" stroke-width="1.4" fill="none" stroke-linejoin="round"/>
<path d="M7 13l3.5 3.5 6-6" stroke="#fff" stroke-width="1.5" fill="none"/>
</svg>
<div class="t" style="left:1536px;top:4.8px;color:#f4f6f8;text-shadow:0 1px 1px rgba(0,0,0,.35)">suporte</div>
<div class="t" style="left:1536px;top:19.9px;color:#f4f6f8;text-shadow:0 1px 1px rgba(0,0,0,.35)">Demonstração Una E.R.P.</div>
<div class="a" style="left:1681px;top:1px;width:34px;height:34px;background:#00a9ea"></div>
<svg class="a" style="left:1688px;top:10px" width="20" height="17" viewBox="0 0 20 17">
<rect x="0.8" y="0.8" width="11" height="8" stroke="#e8f6fd" stroke-width="1.3" fill="none"/>
<path d="M7 8.8v7.4h12V7.2h-7" stroke="#e8f6fd" stroke-width="1.3" fill="none"/>
<path d="M7.5 5l6 6M14.3 7.8v3.8h-3.8" stroke="#fff" stroke-width="1.4" fill="none"/>
</svg>
<svg class="a" style="left:130.5px;top:36.5px" width="16" height="16" viewBox="0 0 16 16"><circle cx="8" cy="8" r="7.4" fill="#3a8fd3"/><path d="M5.9 5.9l4.2 4.2M10.1 5.9l-4.2 4.2" stroke="#fff" stroke-width="2.5" stroke-linecap="round"/></svg>
</body></html>
